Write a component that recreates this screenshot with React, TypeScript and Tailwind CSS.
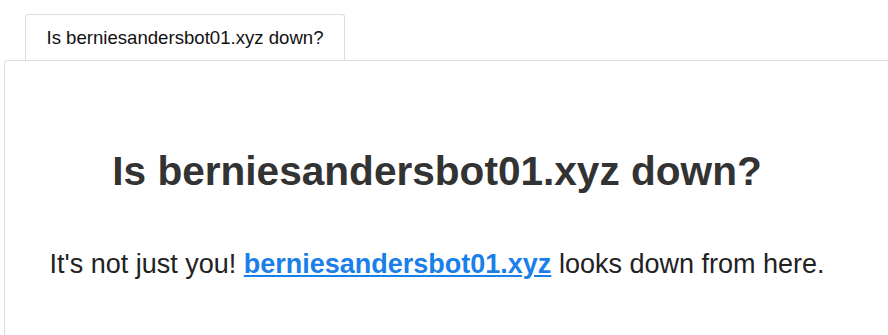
export default function App() {
	return (
		<div className="w-[888px] h-[335px] overflow-hidden bg-white font-['Liberation_Sans',Arial,sans-serif] text-[#333]">
			<div className="pl-[25px] pt-[14px]">
				<div className="w-[320px] h-[46px] border border-b-0 border-[#ddd] rounded-t-[3px] flex items-center justify-center text-[18.6px] text-[#111]">
					Is berniesandersbot01.xyz down?
				</div>
			</div>
			<div className="ml-[4px] w-[900px] h-[300px] border-t border-l border-[#ddd] rounded-tl-[4px]">
				<div className="w-[864px] flex flex-col items-center">
					<h1 className="mt-[86px] text-[40.6px] leading-[48px] font-bold text-[#333]">Is berniesandersbot01.xyz down?</h1>
					<p className="mt-[53px] text-[27px] leading-[32px] text-[#222]">
						It's not just you!{' '}
						<a href="#" className="font-bold text-[#1a7fe8] underline">berniesandersbot01.xyz</a>{' '}
						looks down from here.
					</p>
				</div>
			</div>
		</div>
	);
}
